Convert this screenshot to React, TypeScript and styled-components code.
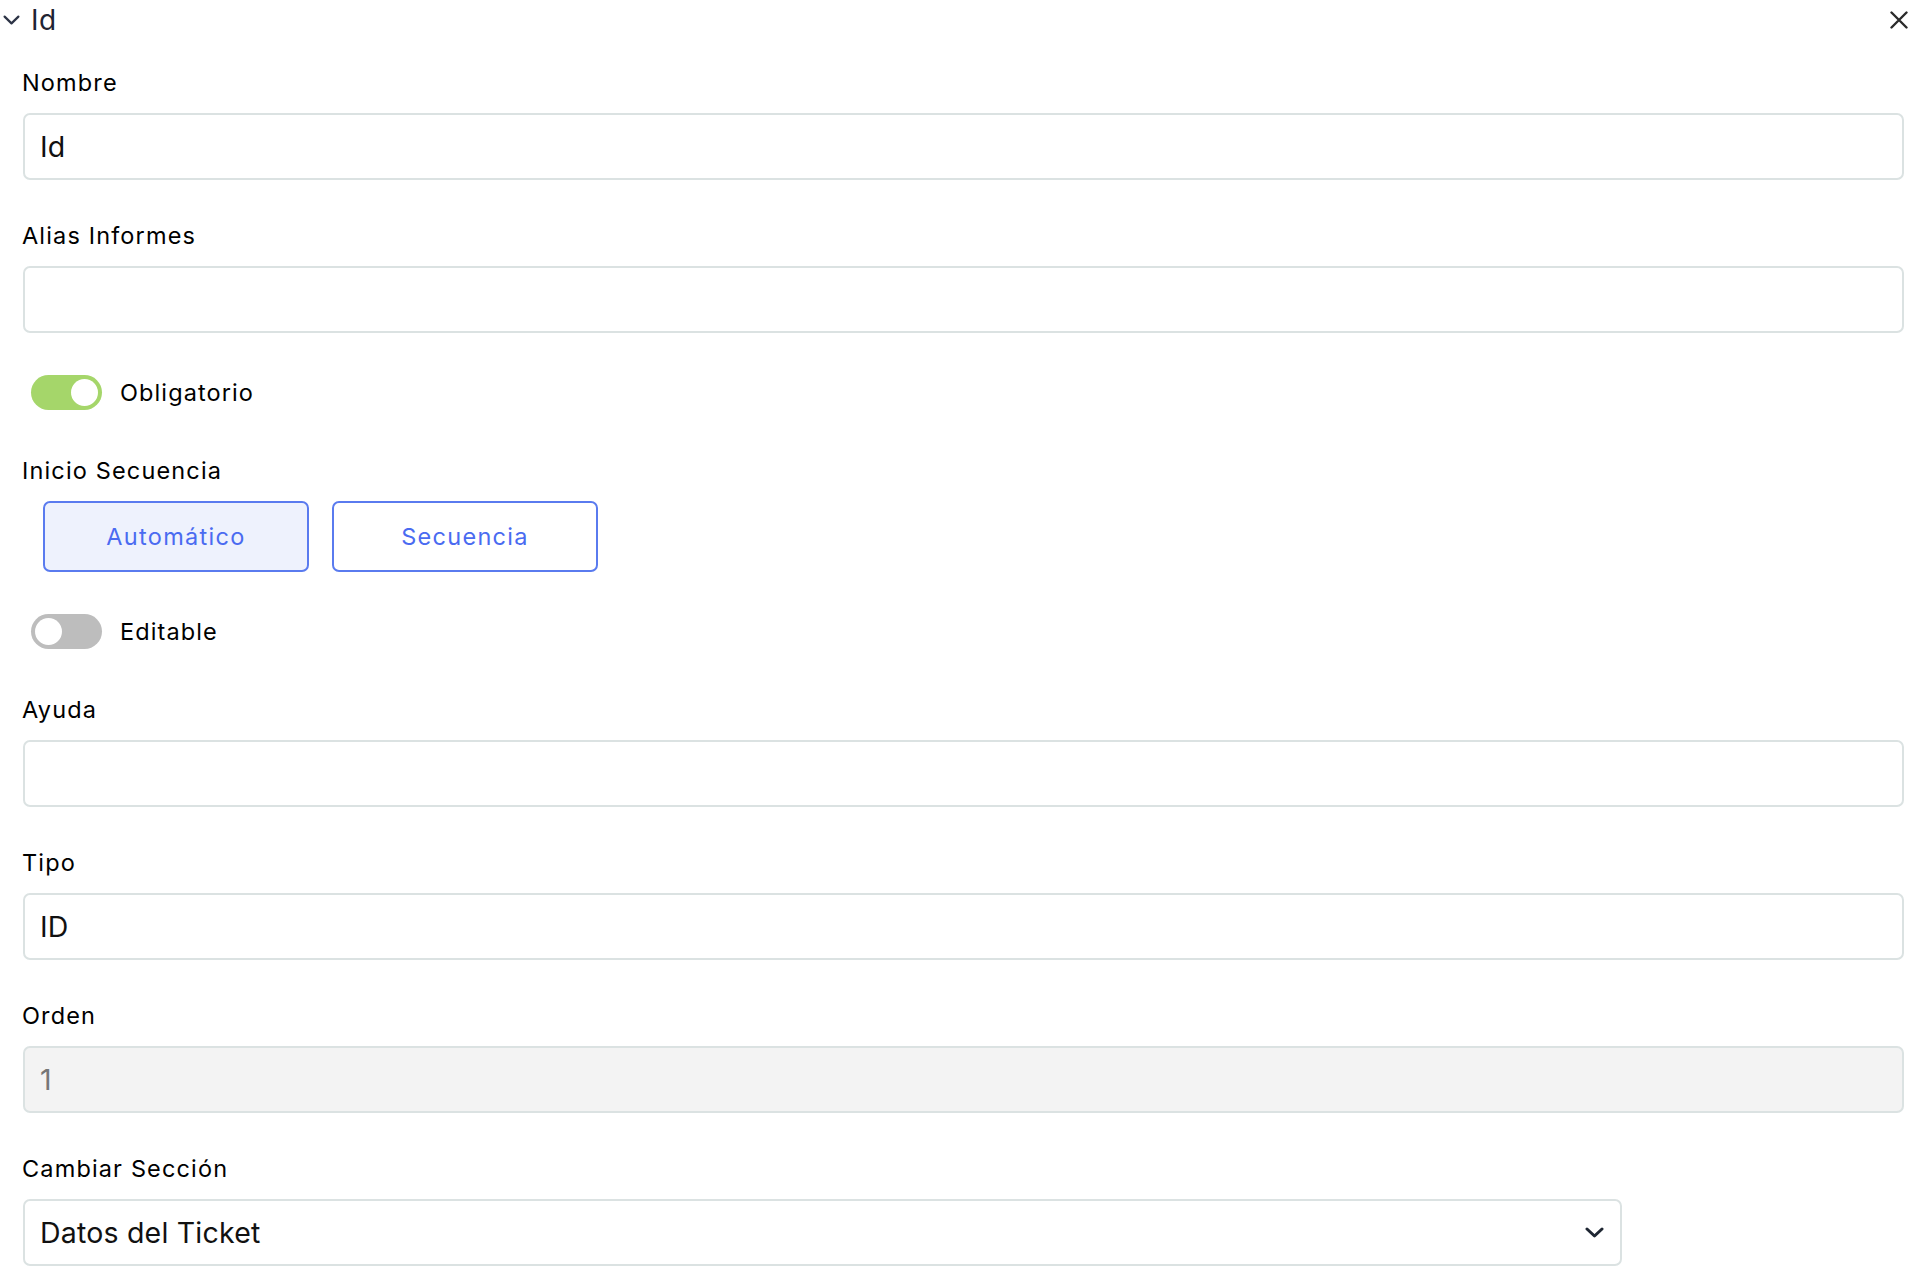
import React, { useState } from "react";
import styled, { createGlobalStyle } from "styled-components";

const GlobalStyle = createGlobalStyle`
  html, body {
    margin: 0;
    padding: 0;
    background: #ffffff;
  }
  body {
    font-family: Inter, "Open Sans", "Liberation Sans", sans-serif;
    color: #000000;
  }
  * { box-sizing: border-box; }
`;

const Page = styled.div`
  width: 1910px;
  min-height: 1268px;
  background: #ffffff;
  display: flex;
  flex-direction: column;
`;

const Header = styled.div`
  height: 40px;
  display: flex;
  align-items: center;
  justify-content: space-between;
  padding: 0 1px 0 3px;
`;

const HeaderTitle = styled.div`
  display: flex;
  align-items: center;
  gap: 11px;
  font-size: 28px;
  line-height: 40px;
  letter-spacing: 0.5px;
  color: #1f2433;
`;

const IconButton = styled.button`
  border: none;
  background: transparent;
  padding: 0;
  display: flex;
  align-items: center;
  justify-content: center;
  cursor: pointer;
  width: 20px;
  height: 20px;
`;

const Form = styled.div`
  display: flex;
  flex-direction: column;
  padding: 0 8px 0 22px;
`;

const Field = styled.div<{ $top: number }>`
  display: flex;
  flex-direction: column;
  gap: 13px;
  margin-top: ${(p) => p.$top}px;
`;

const Label = styled.label`
  font-size: 23.5px;
  line-height: 34px;
  height: 34px;
  letter-spacing: 1.15px;
  color: #000000;
  white-space: nowrap;
`;

const TextBox = styled.div<{ $disabled?: boolean; $width?: string }>`
  height: 67px;
  width: ${(p) => p.$width ?? "calc(100% + 1px)"};
  margin-left: 1px;
  border: 2px solid #dbe2e2;
  border-radius: 7px;
  background: ${(p) => (p.$disabled ? "#f3f3f3" : "#ffffff")};
  display: flex;
  align-items: center;
  padding: 0 16px 0 15px;
  font-size: 28.5px;
  letter-spacing: 0.2px;
  color: ${(p) => (p.$disabled ? "#767676" : "#111111")};
`;

const SelectBox = styled(TextBox)`
  justify-content: space-between;
  padding-right: 16px;
`;

const SwitchRow = styled.div<{ $top: number }>`
  display: flex;
  align-items: center;
  gap: 18px;
  margin-top: ${(p) => p.$top}px;
  padding-left: 9px;
  height: 35px;
`;

const Track = styled.button<{ $on: boolean }>`
  width: 71px;
  height: 35px;
  border-radius: 18px;
  border: none;
  padding: 4px;
  display: flex;
  justify-content: ${(p) => (p.$on ? "flex-end" : "flex-start")};
  align-items: center;
  background: ${(p) => (p.$on ? "#a5d66a" : "#bdbdbd")};
  cursor: pointer;
`;

const Knob = styled.span`
  width: 27px;
  height: 27px;
  border-radius: 50%;
  background: #ffffff;
`;

const SwitchText = styled.span`
  font-size: 23.5px;
  letter-spacing: 1.1px;
  color: #000000;
`;

const ButtonGroup = styled.div`
  display: flex;
  gap: 23px;
  padding-left: 21px;
`;

const OptionButton = styled.button<{ $active: boolean }>`
  width: 266px;
  height: 71px;
  border: 2px solid #5a7bef;
  border-radius: 7px;
  background: ${(p) => (p.$active ? "#eef2fd" : "#ffffff")};
  color: #4a6bf1;
  font-family: inherit;
  font-size: 23.5px;
  letter-spacing: 1.3px;
  cursor: pointer;
`;

const ChevronDown = ({ w, h, sw, color }: { w: number; h: number; sw: number; color: string }) => (
  <svg width={w} height={h} viewBox={`0 0 ${w} ${h}`} fill="none">
    <path
      d={`M${sw / 2 + 0.5} ${sw / 2 + 0.5} L${w / 2} ${h - sw / 2 - 0.5} L${w - sw / 2 - 0.5} ${sw / 2 + 0.5}`}
      stroke={color}
      strokeWidth={sw}
      strokeLinecap="round"
      strokeLinejoin="round"
    />
  </svg>
);

const CloseIcon = () => (
  <svg width="18" height="18" viewBox="0 0 18 18" fill="none">
    <path d="M1.5 1.5 L16.5 16.5 M16.5 1.5 L1.5 16.5" stroke="#2b2b2b" strokeWidth="2.4" strokeLinecap="round" />
  </svg>
);

export default function App() {
  const [obligatorio, setObligatorio] = useState(true);
  const [editable, setEditable] = useState(false);
  const [inicio, setInicio] = useState<"auto" | "seq">("auto");

  return (
    <>
      <GlobalStyle />
      <Page>
        <Header>
          <HeaderTitle>
            <ChevronDown w={17} h={10} sw={2.2} color="#2d3446" />
            <span>Id</span>
          </HeaderTitle>
          <IconButton aria-label="Cerrar">
            <CloseIcon />
          </IconButton>
        </Header>

        <Form>
          <Field $top={26}>
            <Label>Nombre</Label>
            <TextBox>Id</TextBox>
          </Field>

          <Field $top={39}>
            <Label>Alias Informes</Label>
            <TextBox />
          </Field>

          <SwitchRow $top={42}>
            <Track $on={obligatorio} onClick={() => setObligatorio(!obligatorio)}>
              <Knob />
            </Track>
            <SwitchText>Obligatorio</SwitchText>
          </SwitchRow>

          <Field $top={44}>
            <Label>Inicio Secuencia</Label>
            <ButtonGroup>
              <OptionButton $active={inicio === "auto"} onClick={() => setInicio("auto")}>
                Automático
              </OptionButton>
              <OptionButton $active={inicio === "seq"} onClick={() => setInicio("seq")}>
                Secuencia
              </OptionButton>
            </ButtonGroup>
          </Field>

          <SwitchRow $top={42}>
            <Track $on={editable} onClick={() => setEditable(!editable)}>
              <Knob />
            </Track>
            <SwitchText>Editable</SwitchText>
          </SwitchRow>

          <Field $top={44}>
            <Label>Ayuda</Label>
            <TextBox />
          </Field>

          <Field $top={39}>
            <Label>Tipo</Label>
            <TextBox>ID</TextBox>
          </Field>

          <Field $top={39}>
            <Label>Orden</Label>
            <TextBox $disabled>1</TextBox>
          </Field>

          <Field $top={39}>
            <Label>Cambiar Sección</Label>
            <SelectBox $width="1599px">
              <span>Datos del Ticket</span>
              <ChevronDown w={19} h={11} sw={3} color="#1f2733" />
            </SelectBox>
          </Field>
        </Form>
      </Page>
    </>
  );
}
